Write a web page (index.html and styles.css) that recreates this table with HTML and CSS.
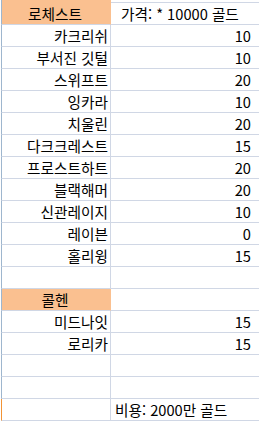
FILE: index.html
```html
<!DOCTYPE html>
<html lang="ko">
<head>
<meta charset="utf-8">
<link rel="stylesheet" href="styles.css">
</head>
<body>
<div class="sheet">
  <div class="cell a head">로체스트</div><div class="cell b first-b price">가격: * 10000 골드</div>
  <div class="cell a">카크리쉬</div><div class="cell b">10</div>
  <div class="cell a">부서진 깃털</div><div class="cell b">10</div>
  <div class="cell a">스위프트</div><div class="cell b">20</div>
  <div class="cell a">잉카라</div><div class="cell b">10</div>
  <div class="cell a">치울린</div><div class="cell b">20</div>
  <div class="cell a">다크크레스트</div><div class="cell b">15</div>
  <div class="cell a">프로스트하트</div><div class="cell b">20</div>
  <div class="cell a">블랙해머</div><div class="cell b">20</div>
  <div class="cell a">신관레이지</div><div class="cell b">10</div>
  <div class="cell a">레이븐</div><div class="cell b">0</div>
  <div class="cell a">홀리윙</div><div class="cell b">15</div>
  <div class="cell a"></div><div class="cell b"></div>
  <div class="cell a head">콜헨</div><div class="cell b"></div>
  <div class="cell a">미드나잇</div><div class="cell b">15</div>
  <div class="cell a">로리카</div><div class="cell b">15</div>
  <div class="cell a"></div><div class="cell b"></div>
  <div class="cell a"></div><div class="cell b"></div>
  <div class="cell a selected"></div><div class="cell b note">비용: 2000만 골드</div>
</div>
</body>
</html>
```
FILE: styles.css
```css
html, body {
  margin: 0;
  padding: 0;
  background: #ffffff;
}
body {
  width: 259px;
  height: 427px;
  overflow: hidden;
  font-family: "Noto Sans CJK KR", "Noto Sans", sans-serif;
  font-size: 14.67px;
  color: #000000;
}
.sheet {
  display: grid;
  grid-template-columns: 111px 160px;
  grid-template-rows: 25px;
  grid-auto-rows: 22px;
}
.cell {
  box-sizing: border-box;
  border-bottom: 1px solid #d0d7e5;
  display: flex;
  align-items: flex-end;
  line-height: 18px;
  padding-bottom: 1px;
  white-space: nowrap;
}
.a {
  margin-left: 1px;
  border-left: 1px solid #9eb6ce;
  border-right: 1px solid #d0d7e5;
  justify-content: flex-end;
  padding-right: 2px;
}
.b {
  justify-content: flex-end;
  padding-right: 20px;
}
.first-b {
  margin-top: 2px;
  border-top: 1px solid #d0d7e5;
}
.head {
  background: #fac090;
  border-right-color: #fac090;
  justify-content: center;
}
.price {
  justify-content: flex-start;
  padding-left: 10px;
  padding-right: 0;
}
.note {
  justify-content: flex-start;
  padding-left: 4px;
  padding-right: 0;
}
.selected {
  border-left-color: #f29436;
}
```
